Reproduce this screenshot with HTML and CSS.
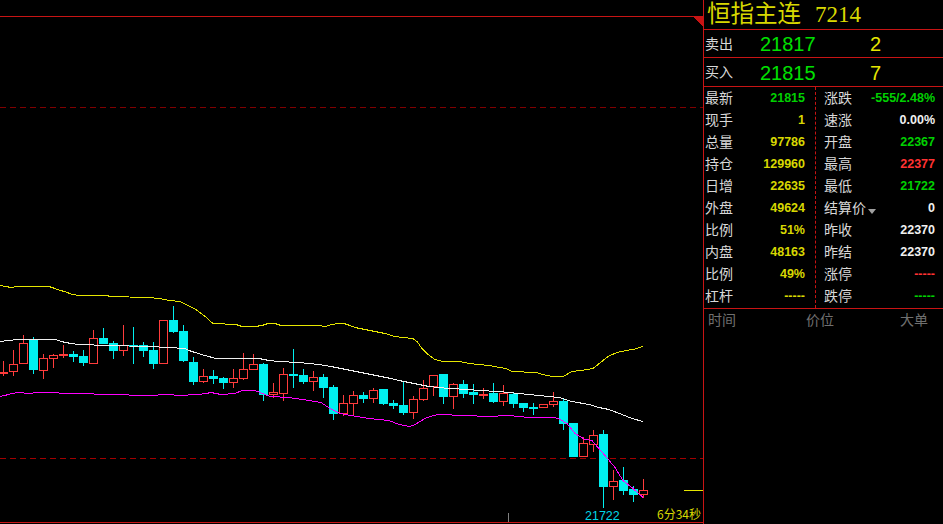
FILE: index.html
```html
<!DOCTYPE html>
<html lang="zh-CN">
<head>
    <meta charset="UTF-8">
    <title>恒指主连 7214</title>
    <link rel="stylesheet" href="styles.css">
</head>
<body>
    <div class="terminal">
        <main class="chart">
            <svg id="kline" class="kline" width="703" height="524" viewBox="0 0 703 524"></svg>
            <span class="chart-low">21722</span>
            <span class="chart-timer">6分34秒</span>
        </main>

        <aside class="panel">
            <div class="title">
                <span class="title-name">恒指主连</span>
                <span class="title-code">7214</span>
            </div>

            <div class="quote">
                <span class="label">卖出</span>
                <span class="quote-price">21817</span>
                <span class="quote-size">2</span>
            </div>
            <div class="quote">
                <span class="label">买入</span>
                <span class="quote-price">21815</span>
                <span class="quote-size">7</span>
            </div>

            <div class="stats">
                <div class="stat-col stat-left">
                    <div class="row"><span class="label">最新</span><span class="num green">21815</span></div>
                    <div class="row"><span class="label">现手</span><span class="num yellow">1</span></div>
                    <div class="row"><span class="label">总量</span><span class="num yellow">97786</span></div>
                    <div class="row"><span class="label">持仓</span><span class="num yellow">129960</span></div>
                    <div class="row"><span class="label">日增</span><span class="num yellow">22635</span></div>
                    <div class="row"><span class="label">外盘</span><span class="num yellow">49624</span></div>
                    <div class="row"><span class="label">比例</span><span class="num yellow">51%</span></div>
                    <div class="row"><span class="label">内盘</span><span class="num yellow">48163</span></div>
                    <div class="row"><span class="label">比例</span><span class="num yellow">49%</span></div>
                    <div class="row"><span class="label">杠杆</span><span class="num yellow">-----</span></div>
                </div>
                <div class="stat-col stat-right">
                    <div class="row"><span class="label">涨跌</span><span class="num green">-555/2.48%</span></div>
                    <div class="row"><span class="label">速涨</span><span class="num white">0.00%</span></div>
                    <div class="row"><span class="label">开盘</span><span class="num green">22367</span></div>
                    <div class="row"><span class="label">最高</span><span class="num red">22377</span></div>
                    <div class="row"><span class="label">最低</span><span class="num green">21722</span></div>
                    <div class="row"><span class="label">结算价<i class="caret"></i></span><span class="num white">0</span></div>
                    <div class="row"><span class="label">昨收</span><span class="num white">22370</span></div>
                    <div class="row"><span class="label">昨结</span><span class="num white">22370</span></div>
                    <div class="row"><span class="label">涨停</span><span class="num red">-----</span></div>
                    <div class="row"><span class="label">跌停</span><span class="num green">-----</span></div>
                </div>
            </div>

            <div class="ticks-head">
                <span>时间</span>
                <span>价位</span>
                <span>大单</span>
            </div>
        </aside>
    </div>

    <script src="chart.js"></script>
</body>
</html>
```

FILE: styles.css
```css
html, body {
    margin: 0;
    padding: 0;
    background-color: #000;
    overflow: hidden;
}
.terminal {
    display: flex;
    width: 943px;
    height: 524px;
    font-family: "Noto Sans CJK SC", "Liberation Sans", sans-serif;
}

/* chart */
.chart {
    position: relative;
    flex: 0 0 703px;
    height: 524px;
}
.kline {
    display: block;
    shape-rendering: crispEdges;
}
.frame {
    stroke: #c81414;
    stroke-width: 1;
    fill: none;
}
.frame-corner {
    fill: #c81414;
}
.grid-line {
    stroke: #a00000;
    stroke-width: 1;
    stroke-dasharray: 6 4;
}
.grid-line-far {
    stroke: #800000;
}
.level-line {
    stroke: #e6e600;
    stroke-width: 1;
}
.hour-tick {
    stroke: #808080;
    stroke-width: 1;
}
.wick-up {
    stroke: #ff3c3c;
}
.wick-down {
    stroke: #00f0f0;
}
.body-up {
    fill: #000;
    stroke: #ff3c3c;
    stroke-width: 1;
}
.body-down {
    fill: #00f0f0;
}
.band {
    fill: none;
    stroke-width: 1;
}
.band-upper {
    stroke: #e6e600;
}
.band-mid {
    stroke: #f0f0f0;
}
.band-lower {
    stroke: #ff00ff;
}
.chart-low {
    position: absolute;
    left: 585px;
    top: 509px;
    font-size: 12.5px;
    line-height: 15px;
    color: #00d8e8;
    font-family: "Liberation Sans", sans-serif;
}
.chart-timer {
    position: absolute;
    right: 2px;
    top: 506px;
    font-size: 12px;
    line-height: 15px;
    color: #d8d800;
}

/* quote panel */
.panel {
    flex: 1;
    border-left: 1px solid #c81414;
    height: 524px;
}
.title {
    display: flex;
    align-items: center;
    gap: 14px;
    height: 29px;
    padding-left: 3px;
    border-bottom: 1px solid #c81414;
    color: #d8d800;
}
.title-name {
    font-family: "Liberation Sans", "Noto Sans CJK SC", sans-serif;
    font-size: 23.5px;
    line-height: 29px;
}
.title-code {
    font-family: "Liberation Serif", serif;
    font-size: 23px;
    line-height: 29px;
}
.quote {
    display: flex;
    align-items: center;
    height: 27px;
    padding-left: 1px;
    border-bottom: 1px solid #c81414;
}
.quote + .quote {
    height: 28px;
}
.quote-price {
    width: 110px;
    margin-left: 27px;
    margin-top: 2px;
    font-family: "Liberation Sans", sans-serif;
    font-size: 20px;
    color: #00e000;
}
.quote-size {
    margin-top: 2px;
    font-family: "Liberation Sans", sans-serif;
    font-size: 20px;
    color: #e6e600;
}
.label {
    margin-bottom: 2px;
    font-size: 14px;
    color: #d8d8d8;
    white-space: nowrap;
}
.stats {
    display: flex;
    height: 221px;
    border-bottom: 1px solid #c81414;
}
.stat-col {
    display: grid;
    grid-auto-rows: 22px;
}
.stat-left {
    width: 112px;
    padding-left: 1px;
    box-sizing: border-box;
    margin-right: 8px;
    border-right: 1px dashed #c81414;
}
.stat-left .row {
    padding-right: 10px;
}
.stat-right {
    width: 111px;
}
.row {
    display: flex;
    justify-content: space-between;
    align-items: center;
}
.num {
    font-family: "Liberation Sans", sans-serif;
    font-weight: bold;
    font-size: 12.5px;
}
.green {
    color: #00d000;
}
.yellow {
    color: #d8d800;
}
.white {
    color: #f0f0f0;
}
.red {
    color: #ff3232;
}
.caret {
    display: inline-block;
    margin-left: 2px;
    border-left: 4.5px solid transparent;
    border-right: 4.5px solid transparent;
    border-top: 5px solid #a0a0a0;
    vertical-align: -1px;
}
.ticks-head {
    display: grid;
    grid-template-columns: 98px 94px auto;
    padding: 1px 0 0 4px;
    font-size: 14px;
    line-height: 19px;
    color: #707070;
}
```

FILE: chart.js
```js
// 每根K线：[类型, 上影, 下影, 实体顶, 实体底]，x 从 3 开始每根加 10
const candles = [
    ['u', 361, 376, 372, 374], ['u', 350, 376, 364, 372], ['u', 335, 364, 343, 364],
    ['d', 337, 374, 339, 370], ['u', 354, 379, 358, 371], ['u', 354, 368, 355, 359],
    ['u', 345, 358, 354, 356], ['d', 351, 362, 354, 357], ['d', 350, 366, 356, 363],
    ['u', 330, 364, 338, 364], ['d', 328, 344, 338, 344], ['d', 341, 359, 343, 351],
    ['u', 325, 356, 345, 351], ['d', 327, 364, 345, 347], ['d', 342, 357, 345, 351],
    ['d', 342, 369, 350, 364], ['u', 320, 364, 320, 364], ['d', 306, 333, 320, 332],
    ['d', 325, 362, 331, 361], ['d', 357, 385, 362, 382], ['u', 369, 383, 376, 382],
    ['d', 370, 384, 376, 379], ['d', 377, 389, 378, 383], ['u', 369, 388, 378, 383],
    ['u', 353, 380, 369, 379], ['u', 354, 370, 364, 370], ['d', 363, 401, 364, 395],
    ['u', 383, 398, 392, 395], ['u', 368, 401, 374, 394], ['d', 349, 388, 374, 376],
    ['d', 369, 384, 375, 382], ['u', 371, 391, 377, 382], ['d', 374, 398, 377, 388],
    ['d', 385, 420, 387, 414], ['u', 395, 416, 403, 414], ['u', 391, 416, 395, 404],
    ['d', 392, 403, 395, 399], ['u', 388, 403, 390, 399], ['d', 389, 405, 389, 404],
    ['d', 400, 409, 403, 406], ['d', 381, 415, 405, 413], ['u', 396, 419, 399, 413],
    ['u', 380, 401, 388, 400], ['u', 375, 396, 375, 387], ['d', 374, 404, 374, 397],
    ['u', 383, 409, 384, 397], ['d', 380, 398, 384, 394], ['d', 384, 404, 392, 395],
    ['u', 388, 399, 394, 396], ['d', 383, 403, 393, 402], ['u', 385, 406, 393, 402],
    ['d', 393, 408, 394, 404], ['d', 403, 412, 403, 408], ['d', 403, 415, 407, 409],
    ['u', 404, 408, 404, 408], ['u', 392, 407, 401, 405], ['d', 398, 430, 401, 424],
    ['d', 423, 457, 423, 457], ['u', 437, 457, 443, 457], ['u', 430, 452, 435, 445],
    ['d', 430, 508, 434, 487], ['u', 470, 500, 481, 487], ['d', 467, 495, 480, 491],
    ['d', 486, 502, 489, 495], ['u', 479, 498, 490, 495]
];

const upper = [[0,285],[6,286],[11,287],[18,286],[49,286],[55,288],[60,290],[65,291],[72,294],[80,295],[108,295],[109,296],[149,297],[159,298],[170,300],[180,301],[188,305],[196,309],[204,315],[213,323],[236,324],[242,326],[255,326],[262,325],[268,323],[275,323],[281,325],[318,325],[325,326],[332,324],[338,323],[344,323],[350,325],[355,327],[365,329],[375,331],[385,333],[395,336],[402,337],[413,338],[417,341],[422,348],[427,353],[435,359],[443,361],[460,361],[469,363],[479,364],[489,365],[500,367],[506,368],[512,371],[536,372],[543,374],[552,376],[563,376],[572,371],[581,370],[593,368],[598,364],[603,360],[608,356],[617,352],[626,350],[633,349],[643,346]];

const mid = [[0,341],[8,340],[18,339],[56,339],[61,341],[71,343],[79,344],[109,345],[149,346],[169,347],[185,348],[189,350],[195,352],[205,355],[216,358],[238,358],[259,358],[269,360],[279,361],[299,362],[309,363],[319,364],[331,366],[341,368],[351,370],[361,372],[371,374],[381,376],[391,378],[399,380],[409,382],[419,384],[429,386],[439,387],[449,388],[469,389],[479,390],[499,391],[519,393],[539,395],[559,397],[572,401],[589,404],[599,407],[609,409],[622,414],[632,418],[643,421]];

const lower = [[0,396],[5,395],[8,394],[12,393],[18,392],[29,393],[38,392],[79,393],[109,394],[149,395],[168,394],[179,395],[198,394],[206,393],[211,392],[216,393],[221,394],[235,393],[242,390],[255,390],[260,392],[270,396],[289,397],[309,400],[321,402],[330,408],[340,413],[351,415],[369,418],[389,420],[399,424],[410,426],[415,424],[425,418],[433,415],[439,414],[489,416],[508,415],[519,416],[529,417],[555,417],[560,419],[567,423],[575,433],[585,439],[592,440],[598,447],[605,455],[615,467],[623,480],[633,488],[643,497]];

const svg = document.getElementById('kline');

function add(tag, cls, attrs) {
    const el = document.createElementNS('http://www.w3.org/2000/svg', tag);
    el.setAttribute('class', cls);
    for (const key in attrs) {
        el.setAttribute(key, attrs[key]);
    }
    svg.appendChild(el);
}

function hline(cls, y, x1, x2) {
    add('line', cls, { x1: x1, x2: x2, y1: y + 0.5, y2: y + 0.5 });
}

// 框线和虚线
hline('frame', 16, 0, 703);
hline('frame', 522, 0, 703);
add('polygon', 'frame-corner', { points: '693,16 703,16 703,27' });
hline('grid-line grid-line-far', 107, 0, 703);
hline('grid-line', 458, 0, 703);
hline('level-line', 490, 684, 703);
add('line', 'hour-tick', { x1: 508.5, x2: 508.5, y1: 513, y2: 522 });

// K线
candles.forEach((c, i) => {
    const x = 3 + i * 10;
    const up = c[0] === 'u';
    add('line', up ? 'wick-up' : 'wick-down', { x1: x + 0.5, x2: x + 0.5, y1: c[1], y2: c[2] });
    if (up) {
        add('rect', 'body-up', { x: x - 3.5, y: c[3] + 0.5, width: 8, height: c[4] - c[3] - 1 });
    } else {
        add('rect', 'body-down', { x: x - 4, y: c[3], width: 9, height: c[4] - c[3] });
    }
});

// 布林线
[['band-upper', upper], ['band-mid', mid], ['band-lower', lower]].forEach(b => {
    const pts = b[1].map(p => p[0] + ',' + (p[1] + 0.5)).join(' ');
    add('polyline', 'band ' + b[0], { points: pts });
});
```
